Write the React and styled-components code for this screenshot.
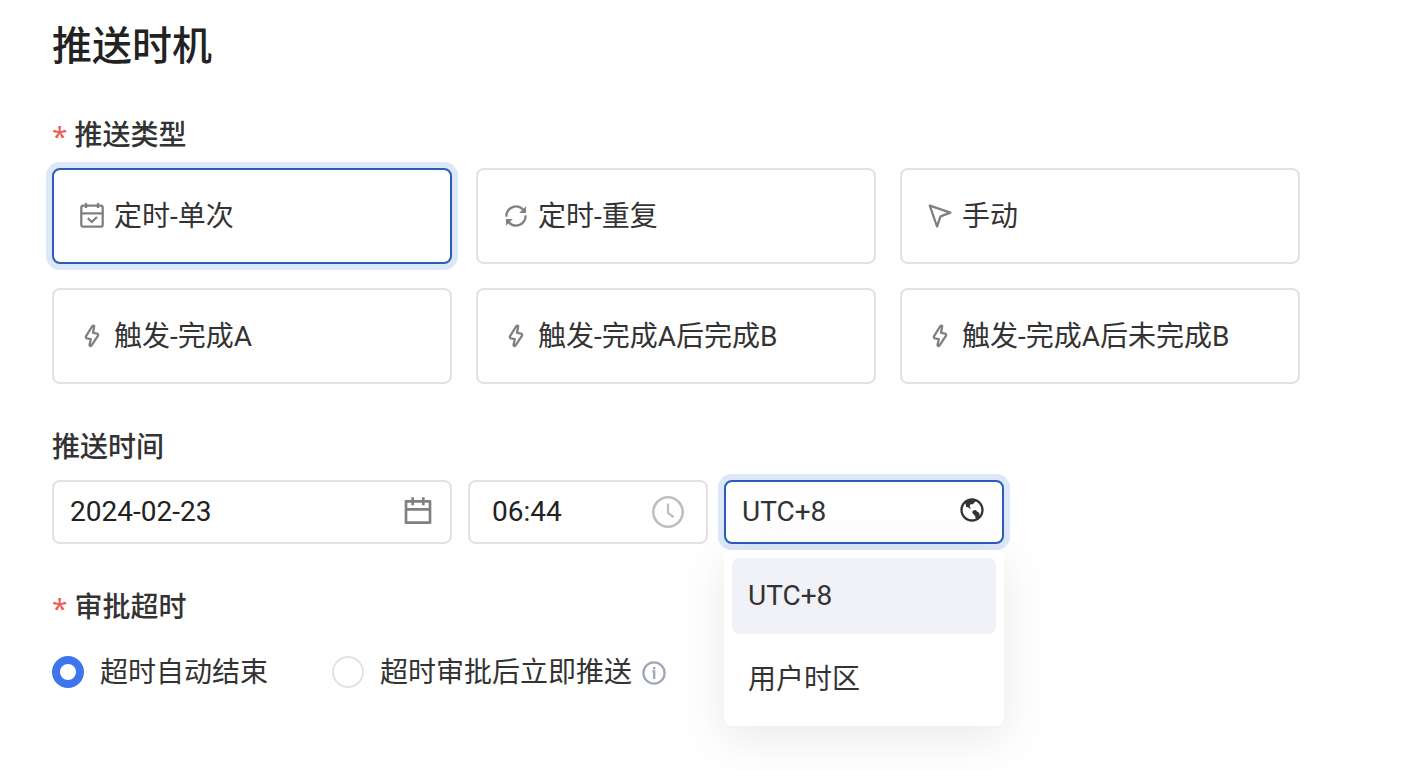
import React, { useState } from "react";
import styled, { createGlobalStyle, css } from "styled-components";
import { RiCalendarLine, RiEarthLine } from "react-icons/ri";

const GlobalStyle = createGlobalStyle`
  *, *::before, *::after { box-sizing: border-box; }
  body {
    margin: 0;
    background: #fff;
    color: #333;
    font-family: Roboto, "Noto Sans CJK SC", sans-serif;
    font-size: 28px;
    line-height: 40px;
  }
  button, input, select { font: inherit; color: inherit; }
`;

const Page = styled.main`
  max-width: 1352px;
  padding: 19px 52px 40px;
`;

const Title = styled.h1`
  margin: 0 0 41px;
  color: #222;
  font-size: 40px;
  line-height: 56px;
  font-weight: 500;
`;

const Section = styled.section`
  display: flex;
  flex-direction: column;
  gap: ${(p) => p.$gap || 12}px;
  margin-bottom: 44px;
`;

const SectionLabel = styled.h2`
  display: flex;
  gap: 7px;
  margin: 0;
  font-size: 28px;
  line-height: 40px;
  font-weight: 500;
`;

const Required = styled.span`
  color: #f0594f;
  font-family: "Noto Sans", sans-serif;
  font-weight: 400;
`;

const focusRing = css`
  border-color: #2b5cb8;
  box-shadow: 0 0 0 6px #dce8f8;
`;

const TypeGrid = styled.div`
  display: grid;
  grid-template-columns: repeat(3, 1fr);
  gap: 24px;
`;

const TypeCard = styled.button`
  display: flex;
  align-items: center;
  gap: 10px;
  height: 96px;
  padding: 0 26px;
  border: 2px solid #e2e2e2;
  border-radius: 8px;
  background: #fff;
  text-align: left;
  outline: none;
  cursor: pointer;
  ${(p) => p.$active && focusRing}
`;

const Caption = styled.span`
  padding-top: 2px;
`;

const Glyph = styled.svg`
  flex: none;
  width: ${(p) => p.$size || 24}px;
  height: ${(p) => p.$size || 24}px;
  overflow: visible;
  fill: none;
  stroke: ${(p) => p.$color || "#808080"};
  stroke-width: 2.3;
`;

const FieldRow = styled.div`
  display: flex;
  gap: 16px;
`;

const Field = styled.div`
  position: relative;
  flex: 0 1 ${(p) => p.$width}px;
  min-width: 0;
`;

const Control = styled.div`
  display: flex;
  align-items: center;
  height: 64px;
  padding: 0 ${(p) => p.$pad || 16}px;
  border: 2px solid #e2e2e2;
  border-radius: 8px;
  background: #fff;
  color: ${(p) => p.$iconColor || "#808080"};
  ${(p) => p.$active && focusRing}
  svg { flex: none; }
`;

const TextInput = styled.input`
  flex: 1;
  min-width: 0;
  width: 100%;
  padding: 0;
  border: 0;
  outline: none;
  background: none;
  color: #222;
`;

const ZoneSelect = styled.select`
  flex: 1;
  min-width: 0;
  padding: 0;
  border: 0;
  outline: none;
  appearance: none;
  background: none;
`;

const ZoneIcon = styled.span`
  display: flex;
  padding-bottom: 4px;
`;

const Menu = styled.div`
  position: absolute;
  top: calc(100% + 6px);
  left: 0;
  right: 0;
  display: flex;
  flex-direction: column;
  gap: 8px;
  padding: 8px;
  border-radius: 8px;
  background: #fff;
  box-shadow: 0 12px 32px rgba(0, 0, 0, 0.03), 0 12px 56px 8px rgba(0, 0, 0, 0.05);
`;

const MenuItem = styled.button`
  height: 76px;
  padding: 0 16px;
  border: 0;
  border-radius: 8px;
  background: ${(p) => (p.$active ? "#f1f2f8" : "transparent")};
  text-align: left;
  cursor: pointer;
`;

const RadioRow = styled.div`
  display: flex;
  gap: 64px;
`;

const RadioLabel = styled.label`
  display: flex;
  align-items: center;
  gap: 16px;
  height: 40px;
  cursor: pointer;
`;

const Radio = styled.input`
  appearance: none;
  flex: none;
  width: 32px;
  height: 32px;
  margin: 0;
  border: 2px solid #e2e2e2;
  border-radius: 50%;
  background: #fff;
  &:checked { border: 8px solid #3d76ec; }
`;

const RadioText = styled.span`
  display: flex;
  align-items: center;
  gap: 10px;
`;

const CalendarCheck = () => (
  <Glyph viewBox="0 0 24 24" aria-hidden="true">
    <rect x="1.3" y="1.7" width="21.4" height="21" rx="2" />
    <path d="M6 -1v5M18 -1v5M1.3 9.3h21.4M7.8 14.2l4 3.8 5.2-5" />
  </Glyph>
);

const Repeat = () => (
  <Glyph viewBox="0 0 24 24" aria-hidden="true">
    <path d="M2.4 12.6A9.6 9.6 0 0 1 20.4 7.4M21.6 11.4A9.6 9.6 0 0 1 3.6 16.6" />
    <path d="M22 2.2V9H15.2ZM2 21.8V15H8.8Z" fill="#808080" stroke="none" />
  </Glyph>
);

const Cursor = () => (
  <Glyph viewBox="0 0 24 24" aria-hidden="true" strokeLinejoin="round">
    <path d="M1.8 1.6 22.4 8.7 12.6 12.4 9 22.5Z" />
  </Glyph>
);

const Bolt = () => (
  <Glyph viewBox="0 0 24 24" aria-hidden="true" strokeLinejoin="round">
    <path d="M14.2 2.2 13.1 8.8 17.2 9.7Q18.6 10.3 18 11.6L11.6 21.4Q10.2 22.8 9.5 21L10.8 15.2 6.8 14.3Q5.2 13.6 6.1 12.2L12 2.5Q13.5 1 14.2 2.2Z" />
  </Glyph>
);

const Clock = () => (
  <Glyph viewBox="0 0 32 32" $size={32} $color="#bfbfbf" aria-hidden="true">
    <circle cx="16" cy="16" r="14.7" strokeWidth="2.6" />
    <path d="M16 7.6V17l5.8 4.2" />
  </Glyph>
);

const Info = () => (
  <Glyph viewBox="0 0 24 24" $color="#a0a5bb" aria-label="说明">
    <circle cx="12" cy="13" r="10.6" />
    <path d="M10.4 11.3H12.2V19M12.2 7v2.4" />
  </Glyph>
);

const TYPES = [
  ["定时-单次", CalendarCheck],
  ["定时-重复", Repeat],
  ["手动", Cursor],
  ["触发-完成A", Bolt],
  ["触发-完成A后完成B", Bolt],
  ["触发-完成A后未完成B", Bolt],
];

const ZONES = ["UTC+8", "用户时区"];

export default function App() {
  const [type, setType] = useState(TYPES[0][0]);
  const [zone, setZone] = useState(ZONES[0]);

  return (
    <>
      <GlobalStyle />
      <Page>
        <Title>推送时机</Title>

        <Section>
          <SectionLabel>
            <Required>*</Required>推送类型
          </SectionLabel>
          <TypeGrid>
            {TYPES.map(([name, Icon]) => (
              <TypeCard
                key={name}
                type="button"
                $active={name === type}
                aria-pressed={name === type}
                onClick={() => setType(name)}
              >
                <Icon />
                <Caption>{name}</Caption>
              </TypeCard>
            ))}
          </TypeGrid>
        </Section>

        <Section>
          <SectionLabel>推送时间</SectionLabel>
          <FieldRow>
            <Field $width={400}>
              <Control>
                <TextInput aria-label="日期" defaultValue="2024-02-23" />
                <RiCalendarLine size={32} />
              </Control>
            </Field>
            <Field $width={240}>
              <Control $pad={22}>
                <TextInput aria-label="时间" defaultValue="06:44" />
                <Clock />
              </Control>
            </Field>
            <Field $width={280}>
              <Control $active $iconColor="#333">
                <ZoneSelect
                  aria-label="时区"
                  value={zone}
                  onChange={(e) => setZone(e.target.value)}
                >
                  {ZONES.map((z) => (
                    <option key={z}>{z}</option>
                  ))}
                </ZoneSelect>
                <ZoneIcon>
                  <RiEarthLine size={28} />
                </ZoneIcon>
              </Control>
              <Menu>
                {ZONES.map((z) => (
                  <MenuItem
                    key={z}
                    type="button"
                    $active={z === zone}
                    onClick={() => setZone(z)}
                  >
                    {z}
                  </MenuItem>
                ))}
              </Menu>
            </Field>
          </FieldRow>
        </Section>

        <Section $gap={24}>
          <SectionLabel>
            <Required>*</Required>审批超时
          </SectionLabel>
          <RadioRow>
            <RadioLabel>
              <Radio type="radio" name="timeout" defaultChecked />
              <RadioText>
                <Caption>超时自动结束</Caption>
              </RadioText>
            </RadioLabel>
            <RadioLabel>
              <Radio type="radio" name="timeout" />
              <RadioText>
                <Caption>超时审批后立即推送</Caption>
                <Info />
              </RadioText>
            </RadioLabel>
          </RadioRow>
        </Section>
      </Page>
    </>
  );
}
